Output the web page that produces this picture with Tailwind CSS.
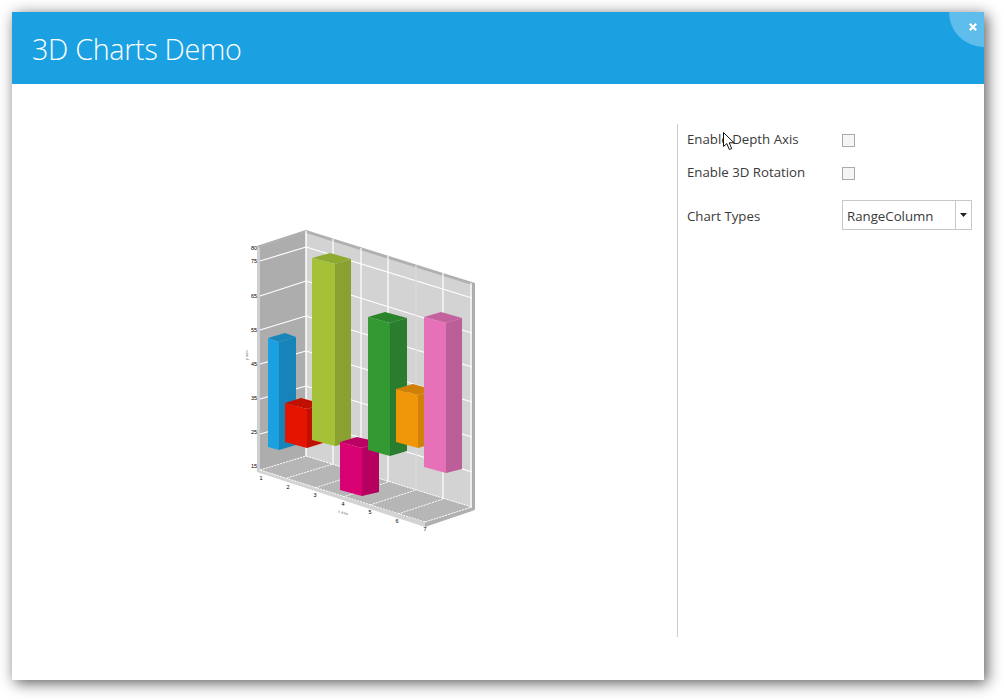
<!DOCTYPE html>
<html lang="en">
<head>
  <meta charset="UTF-8">
  <title>3D Charts Demo</title>
  <script src="https://cdn.jsdelivr.net/npm/@tailwindcss/browser@4"></script>
</head>
<body class="bg-white h-[700px] overflow-hidden font-['Open_Sans',sans-serif]">
  <div class="relative mt-3 ml-3 w-[972px] h-[668px] flex flex-col bg-white shadow-[3px_3px_14px_rgba(0,0,0,0.65)]">
    <header class="relative h-[72px] flex items-center pl-[20px] pt-[2px] bg-[#1ba1e2] overflow-hidden">
      <h1 class="text-[28.7px] font-light text-white tracking-[-0.3px]">3D Charts Demo</h1>
      <button class="absolute top-0 right-0 w-[35px] h-[35px] rounded-bl-full bg-white/30">
        <svg class="absolute top-[11px] right-[7px]" width="8" height="8" viewBox="0 0 8 8"><path d="M0.8 0.8L7.2 7.2M7.2 0.8L0.8 7.2" stroke="#fff" stroke-width="2.2"/></svg>
      </button>
    </header>

    <main class="flex-1 flex pt-10 pb-[43px]">
      <div class="w-[665px]">
        <svg class="block" width="665" height="513" viewBox="12 124 665 513">
          <!-- walls -->
          <polygon points="257,246 306,230 306,456 257,472" fill="#cfcfcf"/>
          <polygon points="260,246 306,231 306,456 260,470" fill="#adadad"/>
          <polygon points="306,231 472,283 472,507 306,456" fill="#d3d3d3"/>
          <polygon points="472,283 475,283 475,510 472,508" fill="#adadad"/>
          <polygon points="257,246 306,230 475,283 472,285 306,233 260,248" fill="#b0b0b0"/>
          <!-- floor -->
          <polygon points="257,472 425,527 425,523 260,470" fill="#d3d3d3"/>
          <polygon points="425,527 475,510 472,507 425,522" fill="#b0b0b0"/>
          <polygon points="260,470 306,456 472,507 425,523" fill="#b6b6b6"/>
          <!-- left wall grid -->
          <g stroke="#fff" stroke-width="1.2">
            <path d="M260 261L306 247M260 296L306 281M260 330L306 316M260 364L306 351M260 399L306 386M260 434L306 421"/>
            <!-- back wall grid -->
            <path d="M306 247L472 298M306 281L472 333M306 316L472 367M306 351L472 402M306 386L472 437M306 421L472 472"/>
            <path d="M333 239V464M361 248V473M388 256V482M443 273V499M471 283V507"/>
            <path d="M306 231V456" stroke-width="1.5"/>
            <path d="M416 265V490" stroke="#dcdcdc"/>
          </g>
          <!-- floor grid -->
          <g stroke="#fff" stroke-width="1" stroke-dasharray="2 1" fill="none">
            <path d="M260 470L306 456M287 478L333 464M315 488L361 473M343 497L388 482M370 505L416 490M398 514L443 499M425 522L472 507"/>
            <path d="M260 470L425 522M306 456L472 507"/>
          </g>
          <!-- blue -->
          <polygon points="268,338 285,333 296,337 279,342" fill="#1a85bb"/>
          <polygon points="279,342 296,337 296,445 279,450" fill="#1784b9"/>
          <polygon points="268,338 279,342 279,450 268,447" fill="#1ba1e2"/>
          <!-- red -->
          <polygon points="285,403 301,398 323,404 307,409" fill="#c01000"/>
          <polygon points="307,409 323,404 323,443 307,448" fill="#c01000"/>
          <polygon points="285,403 307,409 307,448 285,442" fill="#e51400"/>
          <!-- lime -->
          <polygon points="312,258 330,253 351,259 335,264" fill="#8faa30"/>
          <polygon points="335,264 351,259 351,442 335,446" fill="#8aa031"/>
          <polygon points="312,258 335,264 335,446 312,440" fill="#a4c138"/>
          <!-- magenta -->
          <polygon points="340,442 357,437 379,442 362,448" fill="#bb0063"/>
          <polygon points="362,448 379,442 379,492 362,496" fill="#b5005f"/>
          <polygon points="340,442 362,448 362,496 340,490" fill="#d80073"/>
          <!-- green -->
          <polygon points="368,317 385,312 407,318 390,323" fill="#2b842c"/>
          <polygon points="390,323 407,318 407,451 390,456" fill="#2a7d2f"/>
          <polygon points="368,317 390,323 390,456 368,450" fill="#339933"/>
          <!-- orange -->
          <polygon points="396,389 413,384 435,390 418,395" fill="#d08006"/>
          <polygon points="418,395 435,390 435,443 418,448" fill="#d08208"/>
          <polygon points="396,389 418,395 418,448 396,442" fill="#f09609"/>
          <!-- pink -->
          <polygon points="424,317 441,312 462,318 446,323" fill="#c4629e"/>
          <polygon points="446,323 462,318 462,469 446,473" fill="#bc5e98"/>
          <polygon points="424,317 446,323 446,473 424,467" fill="#e671b8"/>
          <!-- axis labels -->
          <g font-family="Liberation Sans, sans-serif" font-size="5.5" fill="#000" text-anchor="end">
            <text x="257" y="250">80</text>
            <text x="257" y="263">75</text>
            <text x="257" y="298">65</text>
            <text x="257" y="332">55</text>
            <text x="257" y="366">45</text>
            <text x="257" y="400">35</text>
            <text x="257" y="434">25</text>
            <text x="257" y="468">15</text>
          </g>
          <g font-family="Liberation Sans, sans-serif" font-size="5.5" fill="#000" text-anchor="middle">
            <text x="261" y="480">1</text>
            <text x="288" y="489">2</text>
            <text x="315" y="497">3</text>
            <text x="343" y="506">4</text>
            <text x="370" y="514">5</text>
            <text x="397" y="523">6</text>
            <text x="425" y="531">7</text>
          </g>
          <text x="343" y="514" font-family="Liberation Sans, sans-serif" font-size="4" fill="#777" text-anchor="middle" transform="rotate(17 343 513)">x axis</text>
          <text x="248" y="355" font-family="Liberation Sans, sans-serif" font-size="4" fill="#777" text-anchor="middle" transform="rotate(-90 248 355)">y axis</text>
        </svg>
      </div>

      <aside class="flex-1 border-l border-[#cccccc] pl-[9px] text-[13.25px] text-[#3a3a3a]">
        <div class="h-[32px] flex items-center">
          <span class="w-[155px] pb-px">Enable Depth Axis</span>
          <span class="w-[13px] h-[13px] border border-[#aaaaaa] bg-[#f5f5f5]"></span>
        </div>
        <div class="mt-px h-[33px] flex items-center">
          <span class="w-[155px] pb-[2px]">Enable 3D Rotation</span>
          <span class="w-[13px] h-[13px] border border-[#aaaaaa] bg-[#f5f5f5]"></span>
        </div>
        <div class="mt-[10px] h-[30px] flex items-center">
          <span class="w-[155px] pt-[3px]">Chart Types</span>
          <div class="w-[130px] h-[30px] flex border border-[#c8c8c8] bg-white">
            <span class="flex-1 flex items-center pl-1 pt-[3px]">RangeColumn</span>
            <span class="w-[16px] flex items-center justify-center border-l border-[#c8c8c8]">
              <svg width="7" height="4" viewBox="0 0 7 4"><polygon points="0,0 7,0 3.5,4" fill="#222"/></svg>
            </span>
          </div>
        </div>
      </aside>
    </main>

    <!-- mouse pointer over the first label -->
    <svg class="absolute left-[711px] top-[120px]" width="13" height="19" viewBox="0 0 13 19">
      <path d="M0.5 0.5V14.5L3.8 11.6L6.3 17.5L8.7 16.5L6.2 10.8H11Z" fill="#fff" stroke="#111" stroke-width="1"/>
    </svg>
  </div>
</body>
</html>
